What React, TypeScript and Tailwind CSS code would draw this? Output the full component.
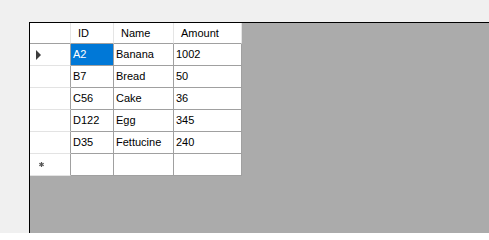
const columns = [
  { key: "id", title: "ID", width: "w-[43px]" },
  { key: "name", title: "Name", width: "w-[60px]" },
  { key: "amount", title: "Amount", width: "w-[68px]" },
];

const rows = [
  { id: "A2", name: "Banana", amount: "1002" },
  { id: "B7", name: "Bread", amount: "50" },
  { id: "C56", name: "Cake", amount: "36" },
  { id: "D122", name: "Egg", amount: "345" },
  { id: "D35", name: "Fettucine", amount: "240" },
];

function CurrentRowGlyph() {
  return (
    <svg width="6" height="10" viewBox="0 0 6 10" className="ml-[6px]">
      <path d="M0 0 L5 5 L0 10 Z" fill="#3c3c3c" />
    </svg>
  );
}

function NewRowGlyph() {
  return (
    <svg width="5" height="5" viewBox="0 0 5 5" className="ml-[9px]">
      <g stroke="#555" strokeWidth="1.2">
        <line x1="2.5" y1="0" x2="2.5" y2="5" />
        <line x1="0.3" y1="1.2" x2="4.7" y2="3.8" />
        <line x1="0.3" y1="3.8" x2="4.7" y2="1.2" />
      </g>
    </svg>
  );
}

export default function App() {
  return (
    <div
      className="w-[489px] h-[233px] overflow-hidden bg-[#f0f0f0] pl-[29px] pt-[22px] text-[11px] text-black"
      style={{ fontFamily: '"Liberation Sans", Arial, sans-serif' }}
    >
      <div className="w-[480px] h-[230px] border-l border-t border-black bg-[#ababab]">
        {/* Column headers */}
        <div className="flex w-fit h-[21px] bg-white">
          <div className="w-[41px] border-r border-b border-r-[#e5e5e5] border-b-[#a0a0a0]" />
          {columns.map((col) => (
            <div
              key={col.key}
              className={`${col.width} flex items-center pl-[7px] border-r border-b border-r-[#e5e5e5] border-b-[#a0a0a0]`}
            >
              {col.title}
            </div>
          ))}
        </div>

        {/* Data rows */}
        {rows.map((row, index) => (
          <div key={row.id} className="flex h-[22px]">
            <div className="w-[41px] flex items-center bg-white border-r border-b border-r-[#a0a0a0] border-b-[#e3e3e3]">
              {index === 0 && <CurrentRowGlyph />}
            </div>
            {columns.map((col) => {
              const selected = index === 0 && col.key === "id";
              return (
                <div
                  key={col.key}
                  className={`${col.width} flex items-center pl-[2px] border-r border-b border-[#a0a0a0] ${
                    selected ? "bg-[#0078d7] text-white" : "bg-white"
                  }`}
                >
                  {row[col.key as keyof typeof row]}
                </div>
              );
            })}
          </div>
        ))}

        {/* New row */}
        <div className="flex h-[22px]">
          <div className="w-[41px] flex items-center bg-white border-r border-b border-r-[#a0a0a0] border-b-[#e3e3e3]">
            <NewRowGlyph />
          </div>
          {columns.map((col) => (
            <div key={col.key} className={`${col.width} bg-white border-r border-b border-[#a0a0a0]`} />
          ))}
        </div>
      </div>
    </div>
  );
}
